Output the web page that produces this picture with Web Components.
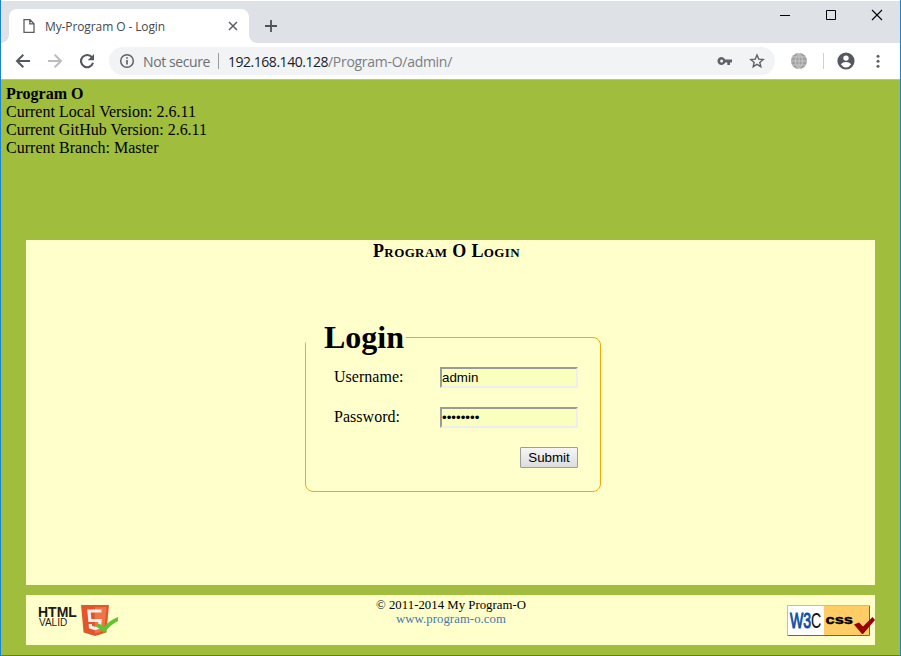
<!DOCTYPE html>
<html lang="en">
<head>
<meta charset="utf-8">
<title>My-Program O - Login</title>
<style>
html,body{margin:0;height:656px;overflow:hidden}
</style>
</head>
<body>
<app-window></app-window>
<script>
const define=(name,html,after)=>{
  const t=document.createElement('template');t.innerHTML=html;
  customElements.define(name,class extends HTMLElement{
    connectedCallback(){
      if(this.shadowRoot)return;
      this.attachShadow({mode:'open'}).append(t.content.cloneNode(true));
      if(after)after(this,this.shadowRoot);
    }
  });
};

/* A run of text spaced to a given width */
define('text-run','<style>:host{display:inline-block;white-space:pre;flex:none}</style><slot></slot>',el=>{
  const target=+el.getAttribute('w');
  const n=el.textContent.length;
  const w=el.getBoundingClientRect().width;
  if(target&&n)el.style.letterSpacing=((target-w)/n)+'px';
});

define('tab-strip',`<style>
:host{display:flex;height:42px;background:#dee1e6;border-top:1px solid #fff;box-sizing:content-box;font:12px "Open Sans","Noto Sans",sans-serif;color:#45494d}
.tab{position:relative;margin:8px 0 0 8px;width:240px;height:34px;background:#fff;border-radius:8px 8px 0 0;display:flex;align-items:center;box-sizing:border-box;padding:0 11px 0 14px}
.tab::before,.tab::after{content:"";position:absolute;bottom:0;width:8px;height:8px}
.tab::before{left:-8px;background:radial-gradient(circle at 0 0,transparent 7.5px,#fff 8px)}
.tab::after{right:-8px;background:radial-gradient(circle at 100% 0,transparent 7.5px,#fff 8px)}
text-run{margin:0 auto 0 10px}
.plus{margin:18px 0 0 15px}
.ctl{margin-left:auto;display:flex;gap:30px;padding:6px 15px 0 0}
svg{display:block;flex:none}
</style>
<div class="tab">
<svg width="12" height="14" viewBox="0 0 12 14" fill="none" stroke="#5a5d61" stroke-width="1.3"><path d="M1 .7h6l4 4v8.600H1zM6.800 .9v4h4"/></svg>
<text-run w="120">My-Program O - Login</text-run>
<svg width="10" height="10" viewBox="0 0 10 10" stroke="#5a5d61" stroke-width="1.5"><path d="M1 1l8 8M9 1l-8 8"/></svg>
</div>
<svg class="plus" width="14" height="14" viewBox="0 0 14 14" stroke="#4f5357" stroke-width="1.8"><path d="M7 1v12M1 7h12"/></svg>
<div class="ctl">
<svg width="16" height="16" viewBox="0 0 16 16" stroke="#000"><path d="M3 8.500h10"/></svg>
<svg width="16" height="16" viewBox="0 0 16 16" stroke="#000" fill="none"><path d="M3.500 3.500h9v9h-9z"/></svg>
<svg width="16" height="16" viewBox="0 0 16 16" stroke="#000" fill="none" stroke-width="1.1"><path d="M3 3l10 10M13 3L3 13"/></svg>
</div>`);

define('tool-bar',`<style>
:host{display:flex;align-items:center;height:36px;background:#fff;border-bottom:1px solid #b9bbbe;font:14px "Open Sans","Noto Sans",sans-serif;color:#5f6368}
svg{display:block;flex:none}
.nav{display:flex;gap:16px;padding-left:14px}
.url{display:flex;align-items:center;width:666px;height:28px;margin-left:14px;border-radius:14px;background:#f1f3f4;box-sizing:border-box;padding:0 10px}
.sec{margin-left:8px;color:#6b6f73;display:block}
.bar{width:1px;height:16px;background:#9a9da1;margin:0 9px 0 8px}
.host{color:#202124}.path{color:#7a7e82;margin-right:auto}
.r{display:flex;align-items:center;flex:1}
</style>
<div class="nav">
<svg width="16" height="16" viewBox="0 0 16 16" fill="none" stroke="#55585d" stroke-width="2"><path d="M15 8H2.500M8.300 1.700L2 8l6.300 6.300"/></svg>
<svg width="16" height="16" viewBox="0 0 16 16" fill="none" stroke="#babcbe" stroke-width="2"><path d="M1 8h12.500M7.700 1.700L14 8l-6.300 6.300"/></svg>
<svg width="16" height="16" viewBox="0 0 16 16"><path d="M13 4.400A6.100 6.100 0 1 0 14 9.800" fill="none" stroke="#55585d" stroke-width="2.1"/><path d="M15 1v6.300H8.700z" fill="#55585d"/></svg>
</div>
<div class="url">
<svg width="16" height="16" viewBox="0 0 16 16"><circle cx="8" cy="8" r="6.3" fill="none" stroke="#5f6368" stroke-width="1.5"/><path d="M8 7v4.600M8 4.200v1.600" stroke="#5f6368" stroke-width="1.7"/></svg>
<text-run class="sec" w="67">Not secure</text-run><div class="bar"></div>
<text-run class="host" w="100">192.168.140.128</text-run><text-run class="path" w="124">/Program-O/admin/</text-run>
<svg width="16" height="16" viewBox="0 0 16 16"><path fill="#5f6368" fill-rule="evenodd" d="M8.200 6.600A4 4 0 1 0 8.200 9.400H10.300V12H13V9.400H15V6.600zM4.600 6.500a1.500 1.500 0 1 1 0 3a1.500 1.500 0 0 1 0-3"/></svg>
<svg style="margin-left:16px" width="16" height="16" viewBox="0 0 16 16"><path fill="none" stroke="#5f6368" stroke-width="1.4" d="M8 2l1.750 4.100 4.450.4-3.400 2.900 1.050 4.300L8 11.400l-3.850 2.300L5.200 9.400 1.800 6.500l4.450-.4z"/></svg>
</div>
<div class="r">
<svg style="margin-left:16px" width="16" height="16" viewBox="0 0 16 16"><circle cx="8" cy="8" r="8" fill="#a1a1a1"/><path d="M8 0v16M0 8h16M1 4h14M1 12h14M8 0Q.5 8 8 16M8 0q7.500 8 0 16" fill="none" stroke="#cfcfcf" stroke-width=".8"/></svg>
<div style="width:1px;height:16px;background:#cfd1d4;margin:0 13px 0 16px"></div>
<svg width="18" height="18" viewBox="0 0 18 18"><circle cx="9" cy="9" r="8.6" fill="#55585f"/><circle cx="9" cy="6.1" r="2.7" fill="#fff"/><path fill="#fff" d="M3.800 12.300Q5.800 10 9 10t5.200 2.300Q12.200 15.400 9 15.400t-5.200-3.100z"/></svg>
<svg style="margin-left:15px" width="16" height="16" viewBox="0 0 16 16" fill="#5f6368"><circle cx="8" cy="3.2" r="1.5"/><circle cx="8" cy="8.2" r="1.5"/><circle cx="8" cy="13.2" r="1.5"/></svg>
</div>`);

define('version-info',`<style>
:host{display:flex;flex-direction:column;align-items:flex-start;height:155px;padding:5px 0 0 5px;box-sizing:content-box;font:16px/18px "Liberation Serif",serif;color:#000}
text-run{height:18px}
</style>
<text-run w="77.5" style="font-weight:bold">Program O</text-run>
<text-run w="190">Current Local Version: 2.6.11</text-run>
<text-run w="201">Current GitHub Version: 2.6.11</text-run>
<text-run w="152.5">Current Branch: Master</text-run>`);

define('login-form',`<style>
:host{display:block;width:296px}
fieldset{margin:0;padding:0 22px 23px 0;border:1px solid orange;border-radius:8px;min-width:0;height:172px;box-sizing:border-box}
legend{padding:0 2px 0 18px;font:bold 32px/35px "Liberation Serif",serif;height:35px}
.row{display:flex;justify-content:space-between;align-items:center;padding-left:28px;height:21px;margin-bottom:19px;font:16px/18px "Liberation Serif",serif}
.row text-run{padding-bottom:2px}
.first{margin-top:12px}
input{box-sizing:border-box;width:138px;height:21px;border:2px solid;border-color:#9a9a9a #eee #eee #9a9a9a;border-radius:0;padding:0;margin:0;background:#faffbd;font:13.333px "Liberation Sans",sans-serif;color:#000;outline:0}
.end{justify-content:flex-end;margin:0}
button{width:58px;height:21px;box-sizing:border-box;padding:0;border:1px solid #9c9c9c;border-radius:1px;background:linear-gradient(#f6f6f6,#dcdcdc);font:13.333px "Liberation Sans",sans-serif;color:#000}
</style>
<fieldset><legend><text-run w="80">Login</text-run></legend>
<div class="row first"><text-run w="69.5">Username:</text-run><input value="admin"></div>
<div class="row"><text-run w="66">Password:</text-run><input type="password" value="password"></div>
<div class="row end"><button>Submit</button></div>
</fieldset>`);

define('login-panel',`<style>
:host{display:flex;flex-direction:column;margin:0 25px;height:345px;background:#ffc;color:#000}
h3{margin:0;padding:1px 8px 0 0;text-align:center;font:bold small-caps 18px/20px "Liberation Serif",serif}
login-form{margin:59px 0 0 279px}
</style>
<h3><text-run w="147">Program O Login</text-run></h3>
<login-form></login-form>`);

define('html-badge',`<style>:host,svg{display:block}</style>
<svg width="84" height="36" viewBox="0 0 84 36" font-family="Liberation Sans,sans-serif" fill="#1a1a1a">
<text x="3" y="15" font-size="14" font-weight="bold">HTML</text>
<text x="4" y="24" font-size="10">VALID</text>
<path d="M46 3h28l-2.600 27.500L60 34l-11.400-3.500z" fill="#e2562c"/><path d="M60 5.300h11.500L69.200 28.600L60 31.500z" fill="#ef7544"/>
<path d="M66.500 9H54l.8 9.500h10.300l-.7 6.500-4.400 1.500-4.500-1.500-.2-3" fill="none" stroke="#f4eeec" stroke-width="3.2"/>
<path d="M60 24l4-2.500 5 3.500q5-6.500 14-10v4q-8 4-14 12-4-4.500-9-7z" fill="#62c22f"/>
</svg>`);

define('css-badge',`<style>:host,svg{display:block}</style>
<svg width="89" height="36" viewBox="0 0 89 36">
<path d="M1 2h83v31H1z" fill="#fff"/><path d="M38 3h45v29H38z" fill="#fc6"/>
<path d="M1.500 33V2.500H84" fill="none" stroke="#bdbdbd"/><path d="M2 32.500h81.500V3" fill="none" stroke="#666"/>
<g font-family="Liberation Sans,sans-serif"><text transform="translate(4 24.500) scale(.64 1)" font-size="22" fill="#0b4fa3" stroke-width="1" stroke="#0b4fa3">W3<tspan fill="#111" stroke="#111" stroke-width=".2">C</tspan></text>
<text transform="translate(39.500 20.500) scale(1.22 1)" font-size="13.5" fill="#000" stroke="#000" stroke-width=".4" font-weight="bold">css</text></g>
<path d="M68 21.500l5-2 4 4 9.500-9.500 2.500 3-12 14h-1z" fill="#900"/>
</svg>`);

define('page-footer',`<style>
:host{display:flex;justify-content:space-between;margin:10px 25px 0;height:50px;background:#ffc;font:12.800px/14px "Liberation Serif",serif;color:#000}
html-badge{margin:7px 0 0 9px}css-badge{margin:8px 0 0}
.c{display:flex;flex-direction:column;align-items:center;padding:3px 3px 0 0}
a{color:#4779ad;text-decoration:none}
</style>
<html-badge></html-badge>
<div class="c"><text-run w="150">© 2011-2014 My Program-O</text-run><a><text-run w="110">www.program-o.com</text-run></a></div>
<css-badge></css-badge>`);

define('app-window',`<style>
:host{display:block;box-sizing:border-box;width:901px;height:656px;border:1px solid #1883d7;border-top:0;background:#a0bd3d;overflow:hidden}
</style>
<tab-strip></tab-strip><tool-bar></tool-bar><version-info></version-info><login-panel></login-panel><page-footer></page-footer>`);
</script>
</body>
</html>
